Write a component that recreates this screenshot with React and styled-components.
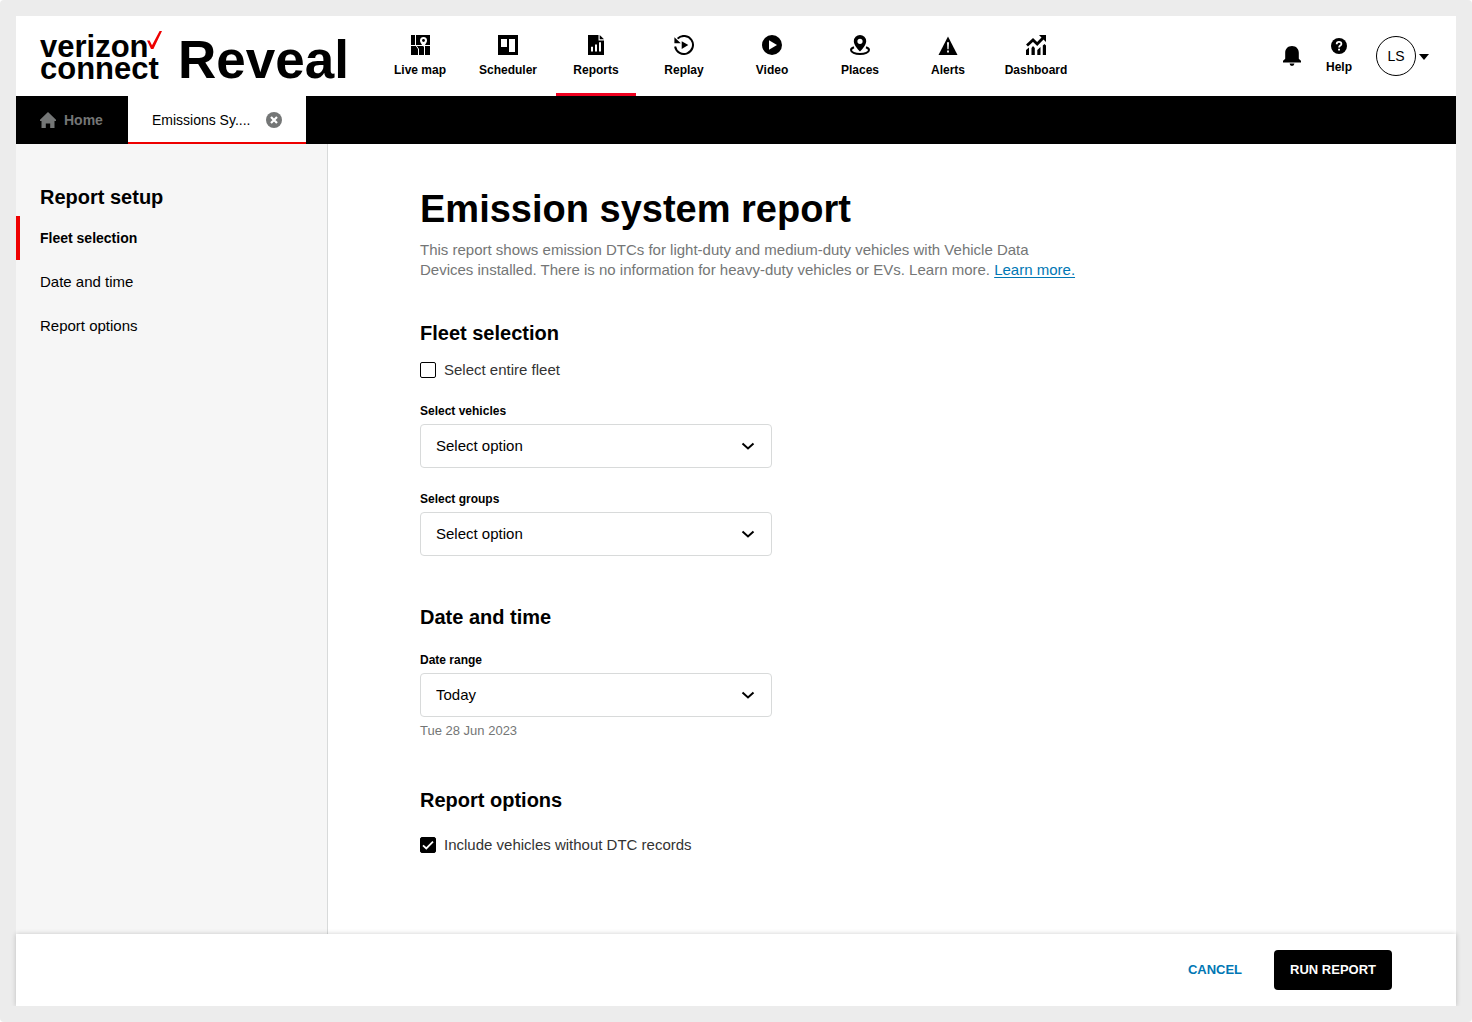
import React, { useState } from "react";
import styled, { createGlobalStyle, css } from "styled-components";

const red = "#ee0000";
const blue = "#0077b4";
const grey = "#747676";

const GlobalStyle = createGlobalStyle`
  *, *::before, *::after { box-sizing: border-box; }
  body {
    margin: 0;
    background: #fff;
    color: #000;
    font-family: "Liberation Sans", Arial, sans-serif;
    font-size: 15px;
    line-height: 20px;
  }
  button, input, select { font: inherit; color: inherit; }
  h1, h2, p { margin: 0; }
  svg { display: block; flex: none; }
`;

const Frame = styled.div`
  min-height: 100vh;
  padding: 16px;
  display: flex;
  flex-direction: column;
  background: #ececec;
  border-radius: 4px;
`;

const Header = styled.header`
  height: 80px;
  flex: none;
  display: flex;
  justify-content: space-between;
  padding: 0 24px;
  background: #fff;
`;

const HeaderStart = styled.div`
  display: flex;
  gap: 28px;
`;

const Logo = styled.a`
  display: flex;
  align-items: center;
  gap: 14px;
  width: 312px;
  flex: none;
  color: #000;
  font-weight: 700;
  text-decoration: none;
`;

const Brand = styled.span`
  position: relative;
  display: flex;
  flex-direction: column;
  width: 124px;
  padding-top: 4px;
  font-size: 31px;
  line-height: 22px;

  svg {
    position: absolute;
    top: -1px;
    right: 1px;
  }
`;

const Product = styled.span`
  padding-top: 8px;
  font-size: 53px;
  line-height: 56px;
`;

const Nav = styled.nav`
  display: flex;
  gap: 8px;
`;

const NavLink = styled.a`
  width: 80px;
  padding-top: 19px;
  display: flex;
  flex-direction: column;
  align-items: center;
  gap: 7px;
  border-bottom: 3px solid ${(p) => (p.$active ? "#f0001f" : "transparent")};
  color: #000;
  font-size: 12px;
  font-weight: 700;
  line-height: 16px;
  text-decoration: none;
  white-space: nowrap;
`;

const HeaderEnd = styled.div`
  display: flex;
  align-items: center;
  gap: 24px;
`;

const plainButton = css`
  padding: 0;
  border: 0;
  background: none;
  cursor: pointer;
`;

const IconButton = styled.button`
  ${plainButton}
  display: flex;
  flex-direction: column;
  align-items: center;
  gap: 5px;
  font-size: 12px;
  font-weight: 700;
  line-height: 16px;
`;

const Account = styled.button`
  ${plainButton}
  display: flex;
  align-items: center;
`;

const Avatar = styled.span`
  width: 40px;
  height: 40px;
  display: grid;
  place-items: center;
  border: 1px solid #000;
  border-radius: 50%;
  font-size: 14px;
`;

const TabBar = styled.nav`
  height: 48px;
  flex: none;
  display: flex;
  background: #000;
  font-size: 14px;
`;

const HomeTab = styled.a`
  display: flex;
  align-items: center;
  gap: 8px;
  padding: 0 25px 0 24px;
  color: ${grey};
  font-weight: 700;
  text-decoration: none;
`;

const Tab = styled.div`
  display: flex;
  align-items: center;
  gap: 16px;
  padding: 2px 24px 0;
  border-bottom: 2px solid ${red};
  background: #fff;

  a { color: inherit; text-decoration: none; }
`;

const Body = styled.div`
  flex: 1;
  display: flex;
`;

const Sidebar = styled.aside`
  width: 312px;
  flex: none;
  padding-top: 41px;
  border-right: 1px solid #d8dada;
  background: #f6f6f6;
`;

const Heading = styled.h2`
  font-size: 20px;
  line-height: 24px;
`;

const SideHeading = styled(Heading)`
  padding: 0 24px;
  margin-bottom: 7px;
`;

const SideLink = styled.a`
  height: 44px;
  display: flex;
  align-items: center;
  padding: 0 20px;
  border-left: 4px solid ${(p) => (p.$active ? red : "transparent")};
  color: #000;
  font-size: ${(p) => (p.$active ? 14 : 15)}px;
  font-weight: ${(p) => (p.$active ? 700 : 400)};
  text-decoration: none;
`;

const Main = styled.main`
  flex: 1;
  min-width: 0;
  padding: 41px 92px 64px;
  background: #fff;
`;

const Title = styled.h1`
  margin-bottom: 7px;
  font-size: 38px;
  line-height: 48px;
`;

const Intro = styled.p`
  max-width: 656px;
  color: ${grey};

  a {
    color: ${blue};
    text-underline-offset: 2px;
    text-decoration-thickness: 1px;
  }
`;

const Section = styled.section`
  margin-top: ${(p) => p.$gap || 49}px;
`;

const CheckLabel = styled.label`
  display: flex;
  align-items: center;
  gap: 8px;
  margin-top: ${(p) => p.$gap}px;
  color: #333;
`;

const CheckBox = styled.span`
  display: grid;

  > * { grid-area: 1 / 1; }
  svg { pointer-events: none; }
`;

const CheckInput = styled.input`
  appearance: none;
  width: 16px;
  height: 16px;
  margin: 0;
  border: 1px solid #000;
  border-radius: 2px;
  background: #fff;

  &:checked { background: #000; }
`;

const Field = styled.div`
  width: 352px;
  max-width: 100%;
  margin-top: 23px;
  display: flex;
  flex-direction: column;
`;

const FieldLabel = styled.label`
  margin-bottom: 5px;
  font-size: 12px;
  font-weight: 700;
  line-height: 16px;
`;

const SelectBox = styled.span`
  display: grid;
  align-items: center;

  > * { grid-area: 1 / 1; }
  svg {
    justify-self: end;
    margin-right: 16px;
    pointer-events: none;
  }
`;

const Select = styled.select`
  appearance: none;
  width: 100%;
  height: 44px;
  padding: 0 40px 0 15px;
  border: 1px solid #d8dada;
  border-radius: 4px;
  background: #fff;
`;

const Hint = styled.p`
  margin-top: 6px;
  color: ${grey};
  font-size: 13px;
  line-height: 16px;
`;

const Footer = styled.footer`
  position: relative;
  height: 72px;
  flex: none;
  display: flex;
  align-items: center;
  justify-content: flex-end;
  gap: 16px;
  padding: 0 64px;
  background: #fff;
  box-shadow: 0 0 5px rgba(0, 0, 0, 0.2);
  clip-path: inset(-8px -8px 0 -8px);
`;

const Action = styled.button`
  height: 40px;
  padding: 0 16px;
  border: 0;
  border-radius: 4px;
  background: ${(p) => (p.$primary ? "#000" : "transparent")};
  color: ${(p) => (p.$primary ? "#fff" : blue)};
  font-size: 13px;
  font-weight: 700;
  cursor: pointer;
`;

const Icon = ({ size = 20, children }) => (
  <svg width={size} height={size} viewBox={`0 0 ${size} ${size}`} aria-hidden="true">
    {children}
  </svg>
);

const MapIcon = () => (
  <Icon>
    <path d="M1 0h19v20H1z" />
    <path d="M5.500 0v10.500M1 10.500h5l2.500 3.500v6M6 10.500h14M14.500 10.500V20" stroke="#fff" fill="none" />
    <path d="M13.500 2a3.500 3.500 0 0 0-3.500 3.500c0 2.400 3.500 6.300 3.500 6.300s3.500-3.900 3.500-6.300A3.500 3.500 0 0 0 13.500 2z" fill="#fff" />
    <circle cx="13.500" cy="5.500" r="1.400" />
  </Icon>
);

const SchedulerIcon = () => (
  <Icon>
    <path fillRule="evenodd" d="M0 0h20v20H0zM3 4v8h6V4zM11 4v13h6V4z" />
  </Icon>
);

const ReportsIcon = () => (
  <Icon>
    <path d="M2 0h10.500v5.500H18V20H2z" />
    <path d="M13.700 0 18 4.300h-4.300z" />
    <path d="M6 11.800v4.700M10 9.500v7M14 7.200v9.300" stroke="#fff" strokeWidth="2" />
  </Icon>
);

const ReplayIcon = () => (
  <Icon>
    <path d="M3.600 3.600A9 9 0 1 1 1.100 11.500" fill="none" stroke="#000" strokeWidth="2" />
    <path d="M.4 2.200 6.800 8.200H.4zM7.700 6.200l6.600 3.900-6.600 3.900z" />
  </Icon>
);

const VideoIcon = () => (
  <Icon>
    <circle cx="10" cy="10" r="10" />
    <path d="M7 5.200v9.600l8-4.800z" fill="#fff" />
  </Icon>
);

const PlacesIcon = () => (
  <Icon>
    <path
      fillRule="evenodd"
      d="M10 0a6.200 6.200 0 0 0-6.200 6.200C3.800 10.500 10 16.500 10 16.500s6.200-6 6.200-10.300A6.200 6.200 0 0 0 10 0zm0 3.700a2.600 2.600 0 1 1 0 5.200 2.600 2.600 0 0 1 0-5.200z"
    />
    <path
      d="M4 12.300c-1.800.7-3 1.500-3 2.600C1 17.200 5 19 10 19s9-1.800 9-4.100c0-1.100-1.200-1.900-3-2.600"
      fill="none"
      stroke="#000"
      strokeWidth="2"
    />
  </Icon>
);

const AlertsIcon = () => (
  <Icon>
    <path d="M10 1.500 19.500 20H.5z" />
    <path d="M9 7.200h2l-.4 7H9.400zM9.100 15.600h1.800v1.800H9.100z" fill="#fff" />
  </Icon>
);

const DashboardIcon = () => (
  <Icon>
    <path d="M1 10.500 7 5l4.200 4L17 3" fill="none" stroke="#000" strokeWidth="2.800" />
    <path d="M13 0h7v7zM0 15l3-2.500V20H0zM5.500 13 7 11l1.800 2v7H5.500zM11.300 15l3.200-3v8h-3.200zM16.800 10.500 18.500 9l1.500 1.500V20h-3.200z" />
  </Icon>
);

const BellIcon = () => (
  <Icon>
    <path d="M10 0C5.800 0 3.200 2.800 3.200 6.800v6L1.500 14.500H1v2h18v-2h-.5l-1.700-1.700v-6C16.800 2.800 14.200 0 10 0zM7.600 17.500h4.800a2.400 2.400 0 0 1-4.800 0z" />
  </Icon>
);

const HelpIcon = () => (
  <Icon size={16}>
    <circle cx="8" cy="8" r="8" />
    <path d="M5.700 6.200C5.700 4.600 6.700 3.900 8 3.900s2.400.7 2.400 2c0 1.600-2.300 1.700-2.300 3.500" fill="none" stroke="#fff" strokeWidth="1.800" />
    <path d="M7.100 10.700h1.900v1.800H7.100z" fill="#fff" />
  </Icon>
);

const HomeIcon = () => (
  <Icon size={16}>
    <path d="M8 0 0 7.700V9h1.500v7h4.300v-4.500h4.400V16h4.300V9H16V7.700z" fill={grey} />
  </Icon>
);

const CloseIcon = () => (
  <Icon size={16}>
    <circle cx="8" cy="8" r="8" fill={grey} />
    <path d="m5 5 6 6M11 5l-6 6" stroke="#fff" strokeWidth="2.200" />
  </Icon>
);

const navItems = [
  ["Live map", MapIcon],
  ["Scheduler", SchedulerIcon],
  ["Reports", ReportsIcon],
  ["Replay", ReplayIcon],
  ["Video", VideoIcon],
  ["Places", PlacesIcon],
  ["Alerts", AlertsIcon],
  ["Dashboard", DashboardIcon],
];

const steps = [
  ["Fleet selection", "fleet"],
  ["Date and time", "date"],
  ["Report options", "options"],
];

function SelectField({ id, label, option, hint }) {
  return (
    <Field>
      <FieldLabel htmlFor={id}>{label}</FieldLabel>
      <SelectBox>
        <Select id={id}>
          <option>{option}</option>
        </Select>
        <Icon size={16}>
          <path d="m2.500 5.500 5.500 5 5.500-5" fill="none" stroke="#000" strokeWidth="2" />
        </Icon>
      </SelectBox>
      {hint && <Hint>{hint}</Hint>}
    </Field>
  );
}

function CheckField({ label, initial, gap }) {
  const [checked, setChecked] = useState(initial);
  return (
    <CheckLabel $gap={gap}>
      <CheckBox>
        <CheckInput type="checkbox" checked={checked} onChange={(e) => setChecked(e.target.checked)} />
        {checked && (
          <Icon size={16}>
            <path d="m3 8.300 3.300 3.200L13 4.700" fill="none" stroke="#fff" strokeWidth="1.800" />
          </Icon>
        )}
      </CheckBox>
      {label}
    </CheckLabel>
  );
}

export default function App() {
  return (
    <>
      <GlobalStyle />
      <Frame>
        <Header>
          <HeaderStart>
            <Logo href="#home">
              <Brand>
                <span>verizon</span>
                <span>connect</span>
                <svg width="16" height="18" viewBox="0 0 16 18" aria-hidden="true">
                  <path d="M0 9.500h2.600L5 14.200 12.600 0H15L6.400 18H4z" fill={red} />
                </svg>
              </Brand>
              <Product>Reveal</Product>
            </Logo>
            <Nav aria-label="Main">
              {navItems.map(([label, Glyph]) => (
                <NavLink key={label} href={`#${label}`} $active={label === "Reports"}>
                  <Glyph />
                  {label}
                </NavLink>
              ))}
            </Nav>
          </HeaderStart>
          <HeaderEnd>
            <IconButton aria-label="Notifications">
              <BellIcon />
            </IconButton>
            <IconButton>
              <HelpIcon />
              Help
            </IconButton>
            <Account>
              <Avatar>LS</Avatar>
              <Icon size={16}>
                <path d="M3 6h10l-5 6z" />
              </Icon>
            </Account>
          </HeaderEnd>
        </Header>

        <TabBar aria-label="Open pages">
          <HomeTab href="#home">
            <HomeIcon />
            Home
          </HomeTab>
          <Tab>
            <a href="#emissions">Emissions Sy....</a>
            <IconButton aria-label="Close tab">
              <CloseIcon />
            </IconButton>
          </Tab>
        </TabBar>

        <Body>
          <Sidebar>
            <SideHeading>Report setup</SideHeading>
            <nav aria-label="Report setup">
              {steps.map(([label, id], i) => (
                <SideLink key={id} href={`#${id}`} $active={i === 0}>
                  {label}
                </SideLink>
              ))}
            </nav>
          </Sidebar>
          <Main>
            <Title>Emission system report</Title>
            <Intro>
              This report shows emission DTCs for light-duty and medium-duty vehicles with Vehicle Data
              <br />
              Devices installed. There is no information for heavy-duty vehicles or EVs. Learn more.{" "}
              <a href="#learn-more">Learn more.</a>
            </Intro>

            <Section id="fleet" $gap={41}>
              <Heading>Fleet selection</Heading>
              <CheckField label="Select entire fleet" initial={false} gap={15} />
              <SelectField id="vehicles" label="Select vehicles" option="Select option" />
              <SelectField id="groups" label="Select groups" option="Select option" />
            </Section>

            <Section id="date">
              <Heading>Date and time</Heading>
              <SelectField id="range" label="Date range" option="Today" hint="Tue 28 Jun 2023" />
            </Section>

            <Section id="options">
              <Heading>Report options</Heading>
              <CheckField label="Include vehicles without DTC records" initial gap={23} />
            </Section>
          </Main>
        </Body>

        <Footer>
          <Action>CANCEL</Action>
          <Action $primary>RUN REPORT</Action>
        </Footer>
      </Frame>
    </>
  );
}
